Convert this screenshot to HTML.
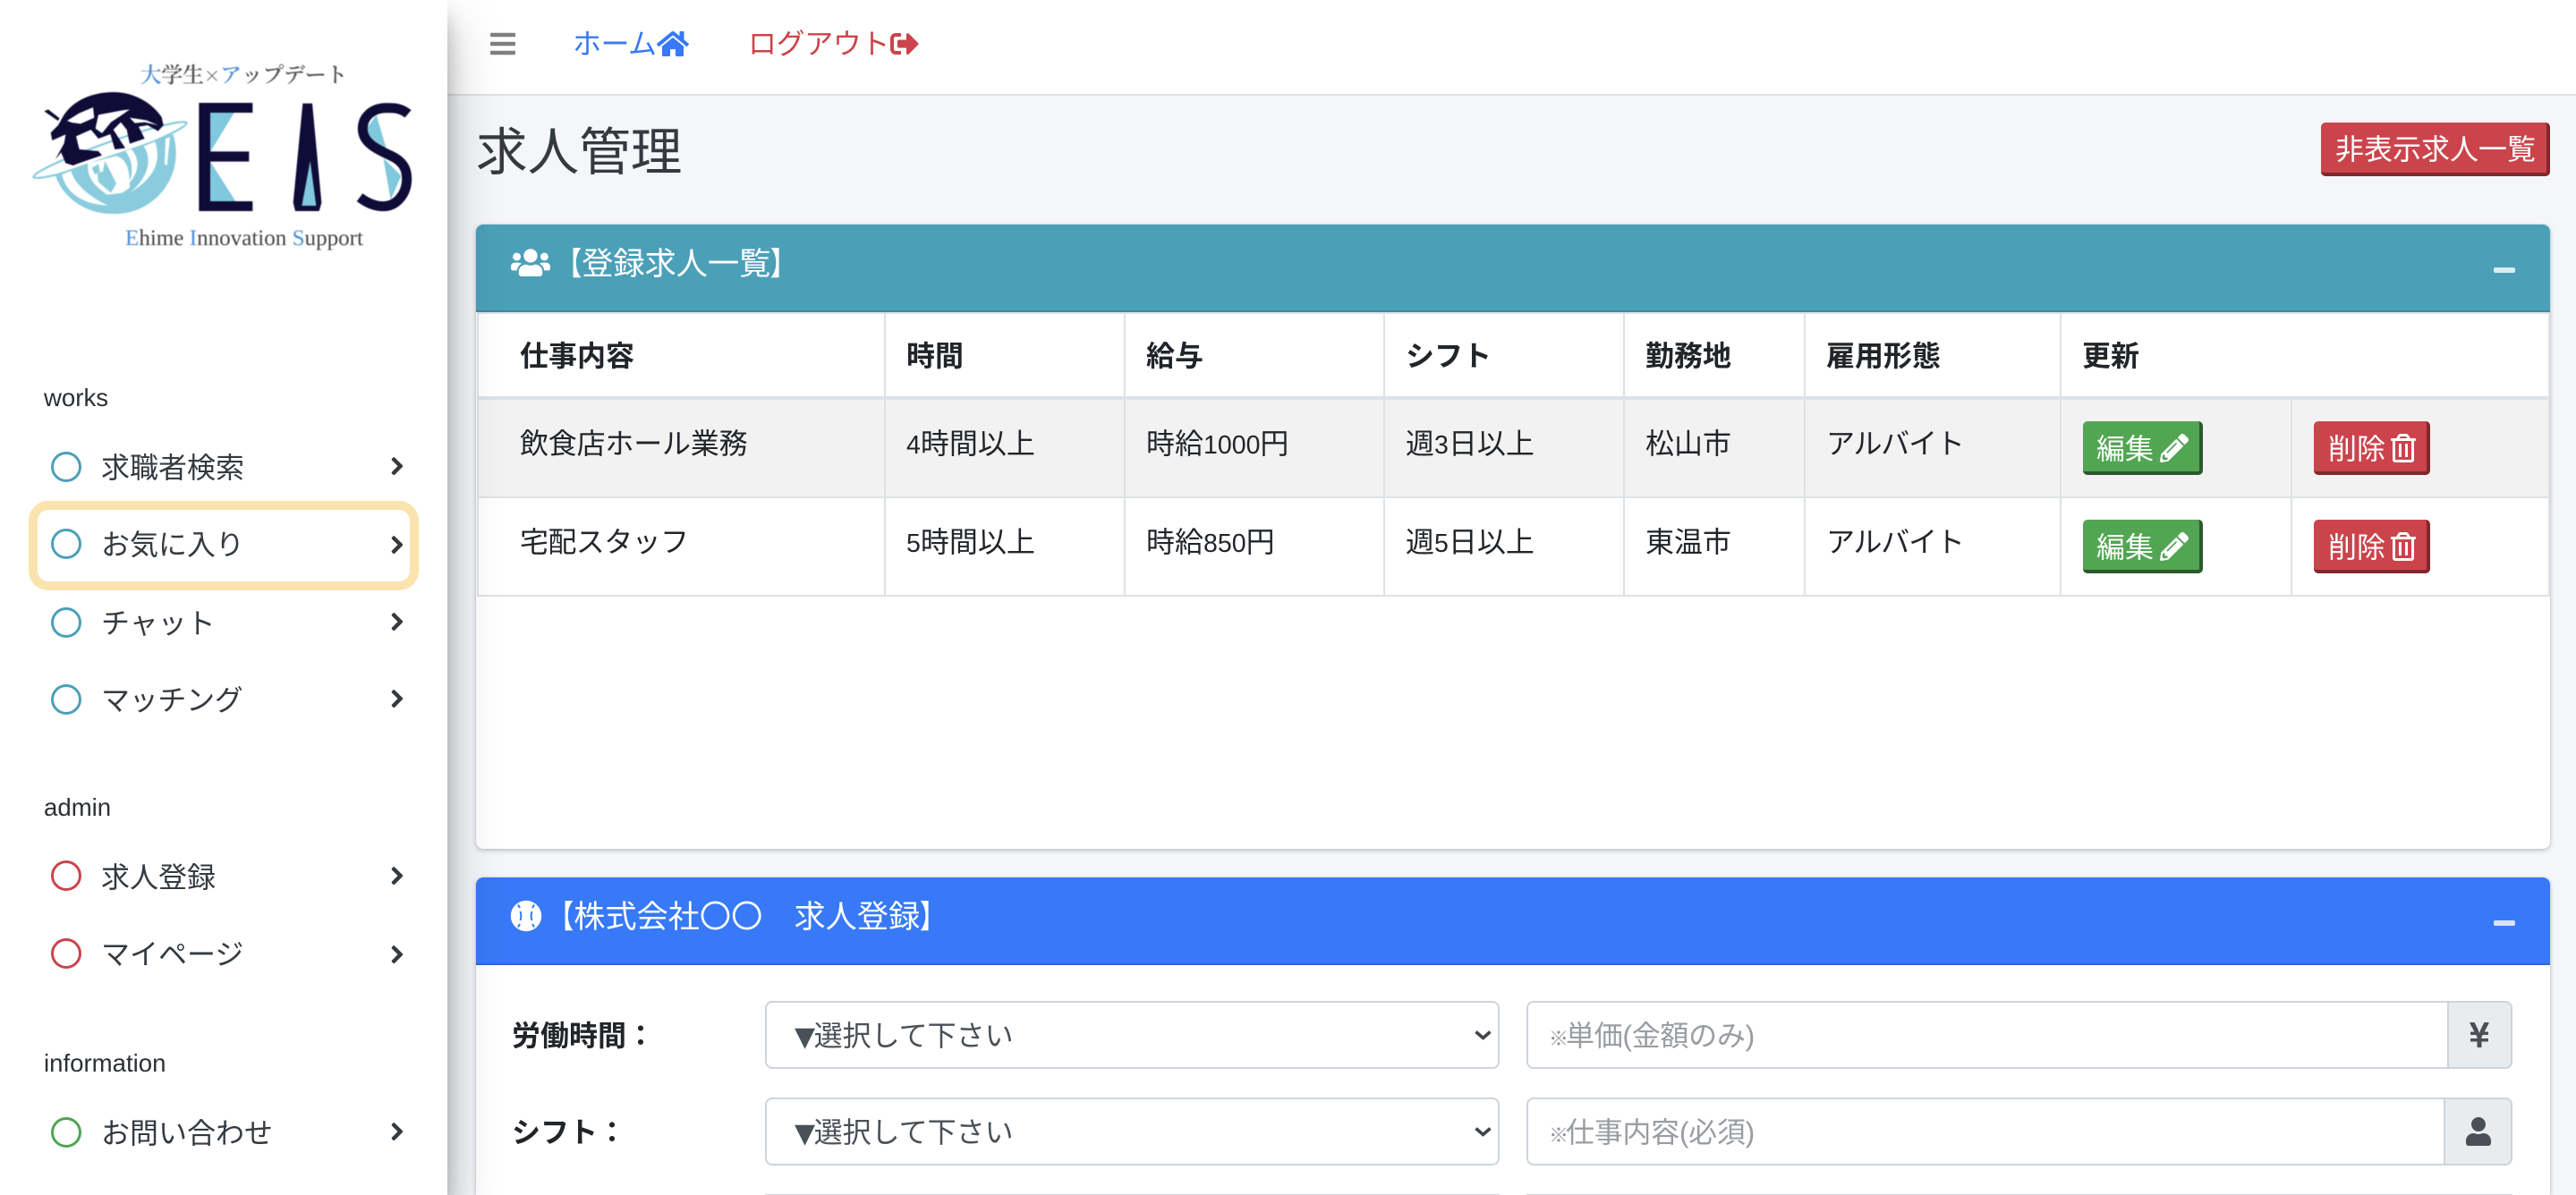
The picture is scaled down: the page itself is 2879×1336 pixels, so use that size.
<!DOCTYPE html>
<html lang="ja">
<head>
<meta charset="utf-8">
<title>求人管理</title>
<style>
html,body{margin:0;padding:0;width:2879px;height:1336px;overflow:hidden;background:#f4f6f9}
body{position:relative;font-family:"Liberation Sans","Noto Sans CJK JP",sans-serif;font-size:32px;color:#212529}
.t{position:absolute;white-space:nowrap;line-height:48px;font-size:32px}
.a{position:absolute;box-sizing:border-box}
svg{position:absolute;display:block}
.n{font-size:28.5px}
.nav{left:0;top:0;width:2879px;height:107px;background:#fff;border-bottom:2px solid #dee2e6}
.side{left:0;top:0;width:500px;height:1336px;background:#fff;box-shadow:0 28px 56px rgba(0,0,0,.25),0 20px 20px rgba(0,0,0,.22);z-index:5}
.s{color:#343a40;z-index:6}
.lb{position:absolute;left:49px;line-height:40px;font-size:27.6px;color:#2b3035;z-index:6}
.c{position:absolute;left:57px;width:34px;height:34px;border-radius:50%;border:3.5px solid #4ba0b8;box-sizing:border-box;z-index:6}
.r{border-color:#cb444c}.g{border-color:#4fa651}
.ch{width:13.9px;height:22.2px;left:437px;z-index:6;fill:#343a40;stroke:#343a40;stroke-width:22}
.card{left:532px;width:2318px;background:#fff;border-radius:8px 8px 0 0;box-shadow:0 0 2px rgba(0,0,0,.125),0 2px 6px rgba(0,0,0,.2)}
.l{position:absolute;background:#dee2e6}
.th{font-weight:700;color:#212529}
.btn{position:absolute;height:60px;box-sizing:border-box;border-radius:5px;border-right:4px solid;border-bottom:4px solid}
.bg{background:#52a553;border-color:#2a5a2b}
.br{background:#cb444c;border-color:#80282d}
.w{color:#fff}
.f{position:absolute;box-sizing:border-box;height:76px;background:#fff;border:2px solid #ced4da;border-radius:8px}
.ad{position:absolute;box-sizing:border-box;height:76px;background:#e9ecef;border:2px solid #ced4da;border-radius:0 8px 8px 0}
.ph{color:#999da2}
.sel{color:#495057}
.mk{font-size:22px;font-weight:700;letter-spacing:-3px;color:#8f9398}
.tri{font-family:'DejaVu Sans',sans-serif;font-size:30px;letter-spacing:-1.5px}
.bo{display:inline-block;font-weight:700;transform:scaleX(.8);transform-origin:100% 50%}
.bc{display:inline-block;font-weight:700;transform:scaleX(.8);transform-origin:0 50%}
</style>
</head>
<body>
<div class="a nav"></div>

<!-- navbar -->
<svg style="left:548px;top:33px" width="28" height="32" viewBox="0 0 448 512" fill="#7f7f7f"><path d="M16 132h416c8.837 0 16-7.163 16-16V76c0-8.837-7.163-16-16-16H16C7.163 60 0 67.163 0 76v40c0 8.837 7.163 16 16 16zm0 160h416c8.837 0 16-7.163 16-16v-40c0-8.837-7.163-16-16-16H16c-8.837 0-16 7.163-16 16v40c0 8.837 7.163 16 16 16zm0 160h416c8.837 0 16-7.163 16-16v-40c0-8.837-7.163-16-16-16H16c-8.837 0-16 7.163-16 16v40c0 8.837 7.163 16 16 16z"/></svg>
<div class="t" style="left:640px;top:25px;color:#3779f6;letter-spacing:-.5px">ホーム</div>
<svg style="left:734px;top:33px" width="36" height="32" viewBox="0 0 576 512" fill="#3779f6"><path d="M280.37 148.26L96 300.11V464a16 16 0 0 0 16 16l112.06-.29a16 16 0 0 0 15.92-16V368a16 16 0 0 1 16-16h64a16 16 0 0 1 16 16v95.64a16 16 0 0 0 16 16.05L464 480a16 16 0 0 0 16-16V300L295.67 148.26a12.19 12.19 0 0 0-15.3 0zM571.6 251.47L488 182.56V44.05a12 12 0 0 0-12-12h-56a12 12 0 0 0-12 12v72.61L318.47 43a48 48 0 0 0-61 0L4.34 251.47a12 12 0 0 0-1.6 16.9l25.5 31A12 12 0 0 0 45.15 301l235.22-193.74a12.19 12.19 0 0 1 15.3 0L530.9 301a12 12 0 0 0 16.9-1.6l25.5-31a12 12 0 0 0-1.7-16.93z"/></svg>
<div class="t" style="left:836px;top:25px;color:#cb444c;letter-spacing:-.4px">ログアウト</div>
<svg style="left:995px;top:33px" width="32" height="32" viewBox="0 0 512 512" fill="#cb444c"><path d="M497 273L329 441c-15 15-41 4.5-41-17v-96H152c-13.3 0-24-10.7-24-24v-96c0-13.3 10.7-24 24-24h136V88c0-21.4 25.9-32 41-17l168 168c9.3 9.4 9.3 24.6 0 34zM192 436v-40c0-6.6-5.4-12-12-12H96c-17.7 0-32-14.3-32-32V160c0-17.7 14.3-32 32-32h84c6.6 0 12-5.4 12-12V76c0-6.6-5.4-12-12-12H96c-53 0-96 43-96 96v192c0 53 43 96 96 96h84c6.6 0 12-5.4 12-12z"/></svg>

<!-- header -->
<div class="t" style="left:532px;top:136px;font-size:57.6px;line-height:70px;color:#343a40">求人管理</div>
<div class="btn br" style="left:2594px;top:137px;width:256px"></div>
<div class="t w" style="left:2610px;top:143px">非表示求人一覧</div>

<!-- card 1 -->
<div class="a card" style="top:251px;height:698px;border-radius:8px"></div>
<div class="a" style="left:532px;top:251px;width:2318px;height:98px;background:#4ba0b8;border-bottom:2px solid #3f8ba1;border-radius:8px 8px 0 0"></div>
<svg style="left:571px;top:276px" width="44" height="35.2" viewBox="0 0 640 512" fill="#fff"><path d="M96 224c35.3 0 64-28.7 64-64s-28.7-64-64-64-64 28.7-64 64 28.7 64 64 64zm448 0c35.3 0 64-28.7 64-64s-28.7-64-64-64-64 28.7-64 64 28.7 64 64 64zm32 32h-64c-17.6 0-33.5 7.1-45.1 18.6 40.3 22.1 68.9 62 75.1 109.4h66c17.7 0 32-14.3 32-32v-32c0-35.3-28.7-64-64-64zm-256 0c61.9 0 112-50.1 112-112S381.9 32 320 32 208 82.1 208 144s50.1 112 112 112zm76.8 32h-8.3c-20.8 10-43.9 16-68.5 16s-47.6-6-68.5-16h-8.3C179.6 288 128 339.6 128 403.2V432c0 26.5 21.5 48 48 48h288c26.5 0 48-21.5 48-48v-28.8c0-63.6-51.6-115.2-115.2-115.2zm-223.7-13.4C161.5 263.1 145.6 256 128 256H64c-35.3 0-64 28.7-64 64v32c0 17.7 14.3 32 32 32h65.9c6.3-47.4 34.9-87.3 75.2-109.4z"/></svg>
<div class="t w" style="left:615px;top:272px;font-size:35.2px"><span class="bo">【</span>登録求人一覧<span class="bc">】</span></div>
<div class="a" style="left:2787px;top:299px;width:24px;height:6px;background:rgba(255,255,255,.8);border-radius:2px"></div>

<!-- table -->
<div class="a" style="left:534px;top:447px;width:2314px;height:108px;background:#f2f2f2"></div>
<div class="l" style="left:533px;top:349px;width:2317px;height:2px"></div>
<div class="l" style="left:533px;top:443px;width:2317px;height:4px"></div>
<div class="l" style="left:533px;top:555px;width:2317px;height:2px"></div>
<div class="l" style="left:533px;top:665px;width:2317px;height:2px"></div>
<div class="l" style="left:533px;top:349px;width:2px;height:318px"></div>
<div class="l" style="left:988px;top:349px;width:2px;height:318px"></div>
<div class="l" style="left:1256px;top:349px;width:2px;height:318px"></div>
<div class="l" style="left:1546px;top:349px;width:2px;height:318px"></div>
<div class="l" style="left:1814px;top:349px;width:2px;height:318px"></div>
<div class="l" style="left:2016px;top:349px;width:2px;height:318px"></div>
<div class="l" style="left:2302px;top:349px;width:2px;height:318px"></div>
<div class="l" style="left:2560px;top:445px;width:2px;height:222px"></div>
<div class="l" style="left:2848px;top:349px;width:2px;height:318px"></div>

<div class="t th" style="left:581px;top:374px">仕事内容</div>
<div class="t th" style="left:1013px;top:374px">時間</div>
<div class="t th" style="left:1281px;top:374px">給与</div>
<div class="t th" style="left:1571px;top:374px">シフト</div>
<div class="t th" style="left:1839px;top:374px">勤務地</div>
<div class="t th" style="left:2041px;top:374px">雇用形態</div>
<div class="t th" style="left:2327px;top:374px">更新</div>

<div class="t" style="left:581px;top:472px;letter-spacing:-.2px">飲食店ホール業務</div>
<div class="t" style="left:1013px;top:472px"><span class="n">4</span>時間以上</div>
<div class="t" style="left:1281px;top:472px">時給<span class="n">1000</span>円</div>
<div class="t" style="left:1571px;top:472px">週<span class="n">3</span>日以上</div>
<div class="t" style="left:1839px;top:472px">松山市</div>
<div class="t" style="left:2041px;top:472px;letter-spacing:-1.2px">アルバイト</div>

<div class="t" style="left:581px;top:582px;letter-spacing:-.6px">宅配スタッフ</div>
<div class="t" style="left:1013px;top:582px"><span class="n">5</span>時間以上</div>
<div class="t" style="left:1281px;top:582px">時給<span class="n">850</span>円</div>
<div class="t" style="left:1571px;top:582px">週<span class="n">5</span>日以上</div>
<div class="t" style="left:1839px;top:582px">東温市</div>
<div class="t" style="left:2041px;top:582px;letter-spacing:-1.2px">アルバイト</div>

<div class="btn bg" style="left:2328px;top:471px;width:134px"></div>
<div class="t w" style="left:2343px;top:478px">編集</div>
<svg style="left:2414px;top:485px" width="32" height="32" viewBox="0 0 512 512" fill="#fff"><path d="M497.9 142.1l-46.1 46.1c-4.7 4.7-12.3 4.7-17 0l-111-111c-4.7-4.7-4.7-12.3 0-17l46.1-46.1c18.7-18.7 49.1-18.7 67.9 0l60.1 60.1c18.8 18.7 18.8 49.1 0 67.9zM284.2 99.8L21.6 362.4.4 483.9c-2.9 16.4 11.4 30.6 27.8 27.8l121.5-21.3 262.6-262.6c4.7-4.7 4.7-12.3 0-17l-111-111c-4.8-4.7-12.4-4.7-17.1 0zM124.1 339.9c-5.5-5.5-5.5-14.3 0-19.8l154-154c5.5-5.5 14.3-5.5 19.8 0s5.5 14.3 0 19.8l-154 154c-5.5 5.5-14.3 5.5-19.8 0zM88 424h48v36.3l-64.5 11.3-31.1-31.1L51.7 376H88v48z"/></svg>
<div class="btn br" style="left:2586px;top:471px;width:130px"></div>
<div class="t w" style="left:2602px;top:478px">削除</div>
<svg style="left:2672px;top:485px" width="28" height="32" viewBox="0 0 448 512" fill="#fff"><path d="M268 416h24a12 12 0 0 0 12-12V188a12 12 0 0 0-12-12h-24a12 12 0 0 0-12 12v216a12 12 0 0 0 12 12zM432 80h-82.41l-34-56.7A48 48 0 0 0 274.41 0H173.59a48 48 0 0 0-41.16 23.3L98.41 80H16A16 16 0 0 0 0 96v16a16 16 0 0 0 16 16h16v336a48 48 0 0 0 48 48h288a48 48 0 0 0 48-48V128h16a16 16 0 0 0 16-16V96a16 16 0 0 0-16-16zM171.84 50.91A6 6 0 0 1 177 48h94a6 6 0 0 1 5.15 2.91L293.61 80H154.39zM368 464H80V128h288zm-212-48h24a12 12 0 0 0 12-12V188a12 12 0 0 0-12-12h-24a12 12 0 0 0-12 12v216a12 12 0 0 0 12 12z"/></svg>

<div class="btn bg" style="left:2328px;top:581px;width:134px"></div>
<div class="t w" style="left:2343px;top:588px">編集</div>
<svg style="left:2414px;top:595px" width="32" height="32" viewBox="0 0 512 512" fill="#fff"><path d="M497.9 142.1l-46.1 46.1c-4.7 4.7-12.3 4.7-17 0l-111-111c-4.7-4.7-4.7-12.3 0-17l46.1-46.1c18.7-18.7 49.1-18.7 67.9 0l60.1 60.1c18.8 18.7 18.8 49.1 0 67.9zM284.2 99.8L21.6 362.4.4 483.9c-2.9 16.4 11.4 30.6 27.8 27.8l121.5-21.3 262.6-262.6c4.7-4.7 4.7-12.3 0-17l-111-111c-4.8-4.7-12.4-4.7-17.1 0zM124.1 339.9c-5.5-5.5-5.5-14.3 0-19.8l154-154c5.5-5.5 14.3-5.5 19.8 0s5.5 14.3 0 19.8l-154 154c-5.5 5.5-14.3 5.5-19.8 0zM88 424h48v36.3l-64.5 11.3-31.1-31.1L51.7 376H88v48z"/></svg>
<div class="btn br" style="left:2586px;top:581px;width:130px"></div>
<div class="t w" style="left:2602px;top:588px">削除</div>
<svg style="left:2672px;top:595px" width="28" height="32" viewBox="0 0 448 512" fill="#fff"><path d="M268 416h24a12 12 0 0 0 12-12V188a12 12 0 0 0-12-12h-24a12 12 0 0 0-12 12v216a12 12 0 0 0 12 12zM432 80h-82.41l-34-56.7A48 48 0 0 0 274.41 0H173.59a48 48 0 0 0-41.16 23.3L98.41 80H16A16 16 0 0 0 0 96v16a16 16 0 0 0 16 16h16v336a48 48 0 0 0 48 48h288a48 48 0 0 0 48-48V128h16a16 16 0 0 0 16-16V96a16 16 0 0 0-16-16zM171.84 50.91A6 6 0 0 1 177 48h94a6 6 0 0 1 5.15 2.91L293.61 80H154.39zM368 464H80V128h288zm-212-48h24a12 12 0 0 0 12-12V188a12 12 0 0 0-12-12h-24a12 12 0 0 0-12 12v216a12 12 0 0 0 12 12z"/></svg>

<!-- card 2 -->
<div class="a card" style="top:981px;height:355px;overflow:hidden"></div>
<div class="a" style="left:532px;top:981px;width:2318px;height:98px;background:#3779f6;border-bottom:2px solid #2f67d2;border-radius:8px 8px 0 0"></div>
<svg style="left:570px;top:1006px" width="36" height="36" viewBox="0 0 36 36"><circle cx="18" cy="18" r="17.2" fill="#fff"/><path d="M9 5.5L11 9M11.5 13C12.5 16 12.5 20 11.5 23M11 27L9 30.5M27 5.5L25 9M24.5 13C23.5 16 23.5 20 24.5 23M25 27L27 30.5" fill="none" stroke="#3779f6" stroke-width="2"/></svg>
<div class="t w" style="left:606px;top:1002px;font-size:35.2px"><span class="bo">【</span>株式会社〇〇　求人登録<span class="bc">】</span></div>
<div class="a" style="left:2787px;top:1029px;width:24px;height:6px;background:rgba(255,255,255,.8);border-radius:2px"></div>

<div class="t th" style="left:572px;top:1134px">労働時間：</div>
<div class="t th" style="left:572px;top:1242px">シフト：</div>

<div class="f" style="left:855px;top:1119px;width:821px"></div>
<div class="t sel" style="left:888px;top:1134px"><span class="tri">▼</span>選択して下さい</div>
<svg style="left:1648px;top:1152px" width="19" height="11" viewBox="0 0 19 11"><path d="M1.5 1.5L9.5 8.5L17.5 1.5" fill="none" stroke="#3f454b" stroke-width="3.6"/></svg>
<div class="f" style="left:1706px;top:1119px;width:1102px"></div>
<div class="ad" style="left:2735px;top:1119px;width:73px"></div>
<div class="t ph" style="left:1731px;top:1134px;letter-spacing:-.3px"><span class="mk">※</span>単価(金額のみ)</div>
<svg style="left:2759px;top:1141px" width="24" height="32" viewBox="0 0 384 512" fill="#495057"><path d="M351.2 32h-65.3c-4.6 0-8.8 2.6-10.8 6.7l-55.4 113.2c-14.5 34.7-27.1 71.9-27.1 71.9h-1.2s-12.6-37.2-27.1-71.9L108.8 38.7c-2-4.1-6.2-6.7-10.8-6.7H32.8c-9.1 0-14.8 9.7-10.6 17.6L102.3 200H44c-6.6 0-12 5.4-12 12v32c0 6.6 5.4 12 12 12h88.2l19.8 37.2V320H44c-6.6 0-12 5.4-12 12v32c0 6.6 5.4 12 12 12h108v92c0 6.6 5.4 12 12 12h56c6.6 0 12-5.4 12-12v-92h108c6.6 0 12-5.4 12-12v-32c0-6.6-5.4-12-12-12H232v-26.8l19.8-37.2H340c6.6 0 12-5.4 12-12v-32c0-6.6-5.4-12-12-12h-58.3l80.1-150.4c4.2-7.9-1.5-17.6-10.6-17.6z"/></svg>

<div class="f" style="left:855px;top:1227px;width:821px"></div>
<div class="t sel" style="left:888px;top:1242px"><span class="tri">▼</span>選択して下さい</div>
<svg style="left:1648px;top:1260px" width="19" height="11" viewBox="0 0 19 11"><path d="M1.5 1.5L9.5 8.5L17.5 1.5" fill="none" stroke="#3f454b" stroke-width="3.6"/></svg>
<div class="f" style="left:1706px;top:1227px;width:1102px"></div>
<div class="ad" style="left:2731px;top:1227px;width:77px"></div>
<div class="t ph" style="left:1731px;top:1242px;letter-spacing:-.3px"><span class="mk">※</span>仕事内容(必須)</div>
<svg style="left:2756px;top:1249px" width="28" height="32" viewBox="0 0 448 512" fill="#495057"><path d="M224 256c70.7 0 128-57.3 128-128S294.7 0 224 0 96 57.3 96 128s57.3 128 128 128zm89.6 32h-16.7c-22.2 10.2-46.9 16-72.9 16s-50.6-5.8-72.9-16h-16.7C60.2 288 0 348.2 0 422.4V464c0 26.5 21.5 48 48 48h352c26.5 0 48-21.5 48-48v-41.6c0-74.2-60.2-134.4-134.4-134.4z"/></svg>

<div class="a" style="left:855px;top:1335px;width:821px;height:1px;background:#ced4da"></div>
<div class="a" style="left:1706px;top:1335px;width:1102px;height:1px;background:#ced4da"></div>

<!-- sidebar -->
<div class="a side"></div>
<!-- logo text and letters -->
<svg style="left:0;top:0;width:520px;height:340px;z-index:6;filter:blur(.6px)" viewBox="0 0 1560 1020">
  <text x="470" y="276" font-family="'Noto Serif CJK SC','Liberation Serif',serif" font-size="72" font-weight="600" textLength="695" lengthAdjust="spacing" fill="#555"><tspan fill="#4f8fd6">大</tspan>学生<tspan font-size="56">×</tspan><tspan fill="#4f8fd6">ア</tspan>ップデート</text>
  <path d="M705 378H785L705 510ZM705 542V675H790Z" fill="#7fc8de"/>
  <path d="M667 345H847V378H705V508H835V542H705V675H847V708H667Z" fill="#0f0c38"/>
  <path d="M1015 347H1047L1078 680L1070 708H990L983 680Z" fill="#0f0c38"/>
  <path d="M1040 540L1012 690H1060Z" fill="#7fc8de"/>
  <path d="M1262 385L1230 430L1240 485L1300 515ZM1285 530L1345 590L1310 670Z" fill="#7fc8de"/>
  <path d="M1368 382C1345 362 1320 362 1296 362C1250 362 1216 390 1216 432C1216 478 1262 500 1310 522C1350 540 1364 565 1364 600C1364 650 1330 692 1285 692C1255 692 1230 680 1206 662" fill="none" stroke="#0f0c38" stroke-width="33"/>
  <text x="420" y="822" font-family="'Liberation Serif',serif" font-size="76" textLength="798" lengthAdjust="spacingAndGlyphs" fill="#444"><tspan fill="#4f8fd6">E</tspan>hime <tspan fill="#4f8fd6">I</tspan>nnovation <tspan fill="#4f8fd6">S</tspan>upport</text>
</svg>
<!-- globe mark -->
<svg style="left:30px;top:95px;width:190px;height:150px;z-index:6;filter:blur(.6px)" viewBox="0 0 570 450">
  <ellipse cx="279" cy="218" rx="272" ry="26" transform="rotate(-19.5 279 218)" fill="#fff" stroke="#8accdd" stroke-width="7"/>
  <path d="M95 300L490 165A204 204 0 0 1 285 432C190 432 115 370 95 300Z" fill="#8accdd"/>
  <path d="M118 300C130 365 195 402 272 404C230 385 165 345 148 288ZM205 262L300 238C345 250 345 310 345 345L320 362L270 368C228 340 200 310 205 262ZM350 215C385 255 372 300 338 335C360 300 355 250 330 222ZM392 205L430 190C448 245 440 305 345 362C400 318 425 255 392 205ZM465 180L480 175L470 270L462 265Z" fill="#fff"/>
  <path d="M262 255L300 330L282 362L240 325L236 295L255 290ZM218 278L240 265L245 290L228 300Z" fill="#8accdd"/>
  <path d="M120 108C150 55 215 24 290 24C360 24 420 60 452 108L458 135L440 155L405 135L375 140L395 180L345 197L335 150L315 125L290 150L330 212L295 216L280 165L240 180L215 150L165 172L176 216L240 222L252 236L175 262L155 270L130 262L115 226L95 250L125 196L130 166L85 186L80 160L105 135Z" fill="#0f0c38"/>
  <path d="M135 120L175 95L222 75L226 110L180 130L150 126ZM240 100L320 85L345 82L312 105L282 125L252 162L230 146ZM345 110L400 118L440 135L395 125L362 128Z" fill="#fff"/>
  <path d="M58 88L72 82L110 112L104 120Z" fill="#0f0c38"/>
</svg>

<div class="lb" style="top:425px">works</div>
<div class="a" style="left:32px;top:560px;width:436px;height:100px;border:10px solid #fae3ac;border-radius:22px;z-index:6"></div>

<div class="c" style="top:505px"></div><div class="t s" style="left:113px;top:499px">求職者検索</div>
<svg class="ch" style="top:510px" viewBox="0 0 320 512"><path d="M285.476 272.971L91.132 467.314c-9.373 9.373-24.569 9.373-33.941 0l-22.667-22.667c-9.357-9.357-9.375-24.522-.04-33.901L188.505 256 34.484 101.255c-9.335-9.379-9.317-24.544.04-33.901l22.667-22.667c9.373-9.373 24.569-9.373 33.941 0L285.475 239.03c9.373 9.372 9.373 24.568.001 33.941z"/></svg>

<div class="c" style="top:591px"></div><div class="t s" style="left:113px;top:585px">お気に入り</div>
<svg class="ch" style="top:598px" viewBox="0 0 320 512"><path d="M285.476 272.971L91.132 467.314c-9.373 9.373-24.569 9.373-33.941 0l-22.667-22.667c-9.357-9.357-9.375-24.522-.04-33.901L188.505 256 34.484 101.255c-9.335-9.379-9.317-24.544.04-33.901l22.667-22.667c9.373-9.373 24.569-9.373 33.941 0L285.475 239.03c9.373 9.372 9.373 24.568.001 33.941z"/></svg>

<div class="c" style="top:679px"></div><div class="t s" style="left:113px;top:673px">チャット</div>
<svg class="ch" style="top:684px" viewBox="0 0 320 512"><path d="M285.476 272.971L91.132 467.314c-9.373 9.373-24.569 9.373-33.941 0l-22.667-22.667c-9.357-9.357-9.375-24.522-.04-33.901L188.505 256 34.484 101.255c-9.335-9.379-9.317-24.544.04-33.901l22.667-22.667c9.373-9.373 24.569-9.373 33.941 0L285.475 239.03c9.373 9.372 9.373 24.568.001 33.941z"/></svg>

<div class="c" style="top:765px"></div><div class="t s" style="left:113px;top:759px;letter-spacing:-.3px">マッチング</div>
<svg class="ch" style="top:770px" viewBox="0 0 320 512"><path d="M285.476 272.971L91.132 467.314c-9.373 9.373-24.569 9.373-33.941 0l-22.667-22.667c-9.357-9.357-9.375-24.522-.04-33.901L188.505 256 34.484 101.255c-9.335-9.379-9.317-24.544.04-33.901l22.667-22.667c9.373-9.373 24.569-9.373 33.941 0L285.475 239.03c9.373 9.372 9.373 24.568.001 33.941z"/></svg>

<div class="lb" style="top:883px">admin</div>
<div class="c r" style="top:962px"></div><div class="t s" style="left:113px;top:957px">求人登録</div>
<svg class="ch" style="top:968px" viewBox="0 0 320 512"><path d="M285.476 272.971L91.132 467.314c-9.373 9.373-24.569 9.373-33.941 0l-22.667-22.667c-9.357-9.357-9.375-24.522-.04-33.901L188.505 256 34.484 101.255c-9.335-9.379-9.317-24.544.04-33.901l22.667-22.667c9.373-9.373 24.569-9.373 33.941 0L285.475 239.03c9.373 9.372 9.373 24.568.001 33.941z"/></svg>

<div class="c r" style="top:1049px"></div><div class="t s" style="left:113px;top:1043px">マイページ</div>
<svg class="ch" style="top:1056px" viewBox="0 0 320 512"><path d="M285.476 272.971L91.132 467.314c-9.373 9.373-24.569 9.373-33.941 0l-22.667-22.667c-9.357-9.357-9.375-24.522-.04-33.901L188.505 256 34.484 101.255c-9.335-9.379-9.317-24.544.04-33.901l22.667-22.667c9.373-9.373 24.569-9.373 33.941 0L285.475 239.03c9.373 9.372 9.373 24.568.001 33.941z"/></svg>

<div class="lb" style="top:1169px">information</div>
<div class="c g" style="top:1249px"></div><div class="t s" style="left:113px;top:1243px">お問い合わせ</div>
<svg class="ch" style="top:1254px" viewBox="0 0 320 512"><path d="M285.476 272.971L91.132 467.314c-9.373 9.373-24.569 9.373-33.941 0l-22.667-22.667c-9.357-9.357-9.375-24.522-.04-33.901L188.505 256 34.484 101.255c-9.335-9.379-9.317-24.544.04-33.901l22.667-22.667c9.373-9.373 24.569-9.373 33.941 0L285.475 239.03c9.373 9.372 9.373 24.568.001 33.941z"/></svg>
</body>
</html>
